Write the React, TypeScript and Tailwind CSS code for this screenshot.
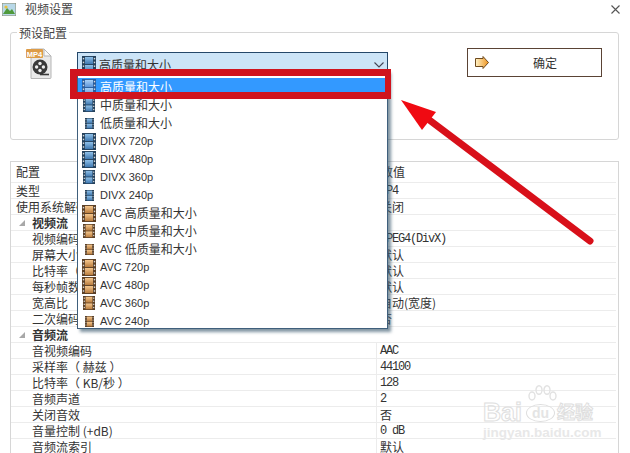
import React from 'react';

const cjk = '[font-family:"Noto_Sans_CJK_SC","Liberation_Sans",sans-serif]';

type Tone = 'blue' | 'orange' | 'hot';

const palette = {
  blue: { edge: '#24415c', top: '#8fc0e8', bottom: '#3f78b0' },
  orange: { edge: '#5c4026', top: '#f6c88e', bottom: '#b97c3e' },
  hot: { edge: '#2a5c9c', top: '#a8d0f8', bottom: '#5c94d8' },
};

/** Film strip icon used in the preset list */
function Film({ tone, size }: { tone: Tone; size: 'lg' | 'md' | 'sm' }) {
  const c = palette[tone];
  const box = size === 'lg' ? 'w-[14px] h-[17px]' : size === 'md' ? 'w-[12px] h-[14px]' : 'w-[9px] h-[11px]';
  return (
    <svg viewBox="0 0 14 18" preserveAspectRatio="none" className={box}>
      <defs>
        <linearGradient id={`film-${tone}`} x1="0" y1="0" x2="0" y2="1">
          <stop offset="0" stopColor={c.top} />
          <stop offset="1" stopColor={c.bottom} />
        </linearGradient>
      </defs>
      <rect width="14" height="18" fill={c.edge} />
      <rect x="3" y="1" width="8" height="7.5" fill={`url(#film-${tone})`} />
      <rect x="3" y="9.5" width="8" height="7.5" fill={`url(#film-${tone})`} />
      {[2, 6, 10, 14].map((y) => (
        <g key={y} fill="#d8d8d8">
          <rect x="0.8" y={y} width="1.4" height="1.6" />
          <rect x="11.8" y={y} width="1.4" height="1.6" />
        </g>
      ))}
    </svg>
  );
}

function Mp4Icon() {
  return (
    <svg width="27" height="32" viewBox="0 0 27 32" className="shrink-0">
      <path d="M5 1h13l7 7v21.5a1 1 0 0 1-1 1H5z" fill="#e9e9e9" stroke="#b5b5b5" />
      <path d="M18 1v7h7z" fill="#fafafa" stroke="#b5b5b5" />
      <rect x="0" y="1" width="17" height="9" rx="1" fill="#dd9c48" />
      <text x="8.5" y="8.5" textAnchor="middle" fontSize="7.5" fontWeight="700" fill="#fff" fontFamily="Liberation Sans">
        MP4
      </text>
      <circle cx="14" cy="19" r="7.5" fill="#3a3a3a" />
      <circle cx="14" cy="15.5" r="1.7" fill="#eee" />
      <circle cx="14" cy="22.5" r="1.7" fill="#eee" />
      <circle cx="10.6" cy="19" r="1.7" fill="#eee" />
      <circle cx="17.4" cy="19" r="1.7" fill="#eee" />
      <path d="M14 26.5h9" stroke="#3a3a3a" strokeWidth="1.6" />
    </svg>
  );
}

type Preset = { prefix?: string; name: string; tone: Tone; size: 'lg' | 'md' | 'sm'; active?: boolean };

const presets: Preset[] = [
  { name: '高质量和大小', tone: 'hot', size: 'lg', active: true },
  { name: '中质量和大小', tone: 'blue', size: 'md' },
  { name: '低质量和大小', tone: 'blue', size: 'sm' },
  { prefix: 'DIVX 720p', name: '', tone: 'blue', size: 'lg' },
  { prefix: 'DIVX 480p', name: '', tone: 'blue', size: 'lg' },
  { prefix: 'DIVX 360p', name: '', tone: 'blue', size: 'md' },
  { prefix: 'DIVX 240p', name: '', tone: 'blue', size: 'sm' },
  { prefix: 'AVC', name: '高质量和大小', tone: 'orange', size: 'lg' },
  { prefix: 'AVC', name: '中质量和大小', tone: 'orange', size: 'md' },
  { prefix: 'AVC', name: '低质量和大小', tone: 'orange', size: 'sm' },
  { prefix: 'AVC 720p', name: '', tone: 'orange', size: 'lg' },
  { prefix: 'AVC 480p', name: '', tone: 'orange', size: 'lg' },
  { prefix: 'AVC 360p', name: '', tone: 'orange', size: 'md' },
  { prefix: 'AVC 240p', name: '', tone: 'orange', size: 'sm' },
];

type Row = { name: string; value?: string; level?: 0 | 1; section?: boolean; latin?: boolean };

const rows: Row[] = [
  { name: '类型', value: 'MP4', level: 0, latin: true },
  { name: '使用系统解码器', value: '关闭', level: 0 },
  { name: '视频流', section: true },
  { name: '视频编码', value: 'MPEG4(DivX)', latin: true },
  { name: '屏幕大小', value: '默认' },
  { name: '比特率（ KB/秒 ）', value: '默认' },
  { name: '每秒帧数', value: '默认' },
  { name: '宽高比', value: '自动(宽度)' },
  { name: '二次编码', value: '否' },
  { name: '音频流', section: true },
  { name: '音视频编码', value: 'AAC', latin: true },
  { name: '采样率（ 赫兹 ）', value: '44100', latin: true },
  { name: '比特率（ KB/秒 ）', value: '128', latin: true },
  { name: '音频声道', value: '2', latin: true },
  { name: '关闭音效', value: '否' },
  { name: '音量控制 (+dB)', value: '0 dB', latin: true },
  { name: '音频流索引', value: '默认' },
];

function PresetRow({ item }: { item: Preset }) {
  return (
    <div className={`h-[18px] flex items-center ${item.active ? 'bg-[#3399ff] text-white' : 'text-[#333]'}`}>
      <div className="w-[22px] flex justify-center shrink-0">
        <Film tone={item.tone} size={item.size} />
      </div>
      {item.prefix && <span className='text-[11px] [font-family:"Liberation_Sans",sans-serif]'>{item.prefix}</span>}
      {item.name && <span className={`text-[12px] ${item.prefix ? 'ml-[3px]' : ''}`}>{item.name}</span>}
    </div>
  );
}

function TableRow({ row }: { row: Row }) {
  return (
    <div className="h-[16px] flex items-center border-b border-[#ececec] text-[12px] leading-none text-[#333] box-border">
      <div className="w-[365px] shrink-0 h-full flex items-center whitespace-nowrap">
        {row.section ? (
          <>
            <svg width="6" height="6" viewBox="0 0 6 6" className="ml-[8px] mr-[7px]">
              <polygon points="6,0 6,6 0,6" fill="#a8a8a8" />
            </svg>
            <span className="font-bold">{row.name}</span>
          </>
        ) : (
          <span className={row.level === 0 ? 'pl-[5px]' : 'pl-[21px]'}>{row.name}</span>
        )}
      </div>
      {!row.section && (
        <div
          className={`h-full flex items-center border-l border-[#ececec] pl-[3px] ${
            row.latin ? 'tracking-[-1.2px] [font-family:"Liberation_Mono",monospace]' : ''
          }`}
        >
          {row.value}
        </div>
      )}
    </div>
  );
}

function Watermark() {
  return (
    <div className="absolute left-[483px] top-[385px] w-[114px] h-[54px] pointer-events-none select-none">
      <svg width="30" height="24" viewBox="0 0 30 24" className="absolute left-[44px] top-0" fill="none" stroke="#e2e2e2" strokeWidth="1.4">
        <ellipse cx="5" cy="11" rx="3" ry="4" />
        <ellipse cx="12" cy="5" rx="3" ry="4.2" />
        <ellipse cx="20" cy="5" rx="3" ry="4.2" />
        <ellipse cx="26" cy="11" rx="3" ry="4" />
      </svg>
      <div className='absolute left-0 top-[12px] text-[25px] leading-[30px] font-bold text-transparent [-webkit-text-stroke:1px_#dedede] [font-family:"Liberation_Sans",sans-serif]'>
        Bai
      </div>
      <div className='absolute left-[43px] top-[19px] w-[29px] h-[18px] rounded-[50%] border border-[#dedede] flex items-center justify-center text-[14px] leading-none font-bold text-[#e4e4e4] [font-family:"Liberation_Sans",sans-serif]'>
        du
      </div>
      <div className="absolute left-[74px] top-[15px] text-[18px] leading-[22px] font-bold text-transparent [-webkit-text-stroke:1px_#dedede]">
        经验
      </div>
      <div className='absolute left-0 top-[41px] text-[13.5px] leading-[13px] font-bold whitespace-nowrap text-[#e8e8e8] [font-family:"Liberation_Sans",sans-serif]'>
        jingyan.baidu.com
      </div>
    </div>
  );
}

export default function App() {
  return (
    <div className={`relative w-[630px] h-[453px] overflow-hidden bg-white text-[12px] ${cjk}`}>
      {/* title bar */}
      <div className="h-[18px] flex items-center pl-[2px] pr-[10px] text-[#444]">
        <svg width="14" height="13" viewBox="0 0 14 13" className="shrink-0">
          <rect width="14" height="13" fill="#b8d8e8" stroke="#8a8a6a" />
          <path d="M1 11l4-6 3 3 2-2 3 5z" fill="#4f9a3c" />
          <circle cx="4" cy="4" r="1.6" fill="#e8c040" />
        </svg>
        <span className="ml-[9px]">视频设置</span>
        <svg width="9" height="9" viewBox="0 0 9 9" className="ml-auto" stroke="#555" strokeWidth="1.1">
          <path d="M0.5 0.5l8 8M8.5 0.5l-8 8" />
        </svg>
      </div>

      {/* preset group */}
      <div className="relative mt-[14px] mx-[10px] w-[609px] h-[108px] rounded-[3px] border border-[#d6d6d6] flex items-start pl-[15px] pt-[15px]">
        <span className="absolute left-[6px] -top-[9px] bg-white px-[2px] leading-[17px] text-[#444]">预设配置</span>
        <Mp4Icon />
        <div className="relative ml-[24px] mt-[4px] w-[311px] shrink-0">
          <div className="h-[18px] bg-[#cce4f7] border border-[#25486a] border-b-0 flex items-center text-[#333] pt-[6px]">
            <div className="w-[21px] flex justify-center shrink-0">
              <Film tone="blue" size="lg" />
            </div>
            <span>高质量和大小</span>
            <svg width="10" height="6" viewBox="0 0 10 6" fill="none" stroke="#445" strokeWidth="1.1" className="ml-auto mr-[3px]">
              <path d="M0.5 0.5l4.5 4.5 4.5-4.5" />
            </svg>
          </div>
          {/* open dropdown */}
          <div className="absolute left-0 top-[18px] z-10 w-[311px] h-[259px] bg-white border border-[#3f5f7c] pt-[7px] shadow-[3px_3px_3px_rgba(60,90,110,0.65)]">
            {presets.map((item, i) => (
              <PresetRow key={i} item={item} />
            ))}
          </div>
        </div>
        <button className="ml-[79px] w-[135px] h-[29px] border border-[#5a4335] flex items-center pl-[7px] text-[#333]">
          <svg width="14" height="13" viewBox="0 0 14 13">
            <defs>
              <linearGradient id="ok-arrow" x1="0" y1="0" x2="1" y2="0">
                <stop offset="0" stopColor="#fff3c8" />
                <stop offset="1" stopColor="#ee9420" />
              </linearGradient>
            </defs>
            <path d="M0.5 2.5h7.5v-2l5.5 6-5.5 6v-2h-7.5z" fill="url(#ok-arrow)" stroke="#6e4a1e" />
          </svg>
          <span className="flex-1 text-center">确定</span>
        </button>
      </div>

      {/* property table */}
      <div className="mt-[21px] mx-[10px] w-[609px] border-x border-t border-[#d6d6d6] pr-[2px]">
        <div className="h-[21px] flex items-center border-b border-[#ececec] text-[#333]">
          <div className="w-[365px] pl-[5px] shrink-0">配置</div>
          <div className="pl-[5px]">数值</div>
        </div>
        {rows.map((row, i) => (
          <TableRow key={i} row={row} />
        ))}
      </div>

      <Watermark />

      {/* red annotation */}
      <div className="absolute left-[70px] top-[69px] z-20 w-[321px] h-[30px] border-[7px] border-r-[6px] border-[#d0141e]" />
      <svg width="630" height="453" viewBox="0 0 630 453" className="absolute left-0 top-0 z-20 pointer-events-none">
        <path d="M428 119L590 241" stroke="#d8101a" strokeWidth="7" strokeLinecap="round" />
        <polygon points="401,100 436,112 422,130" fill="#f00a12" />
      </svg>
    </div>
  );
}
